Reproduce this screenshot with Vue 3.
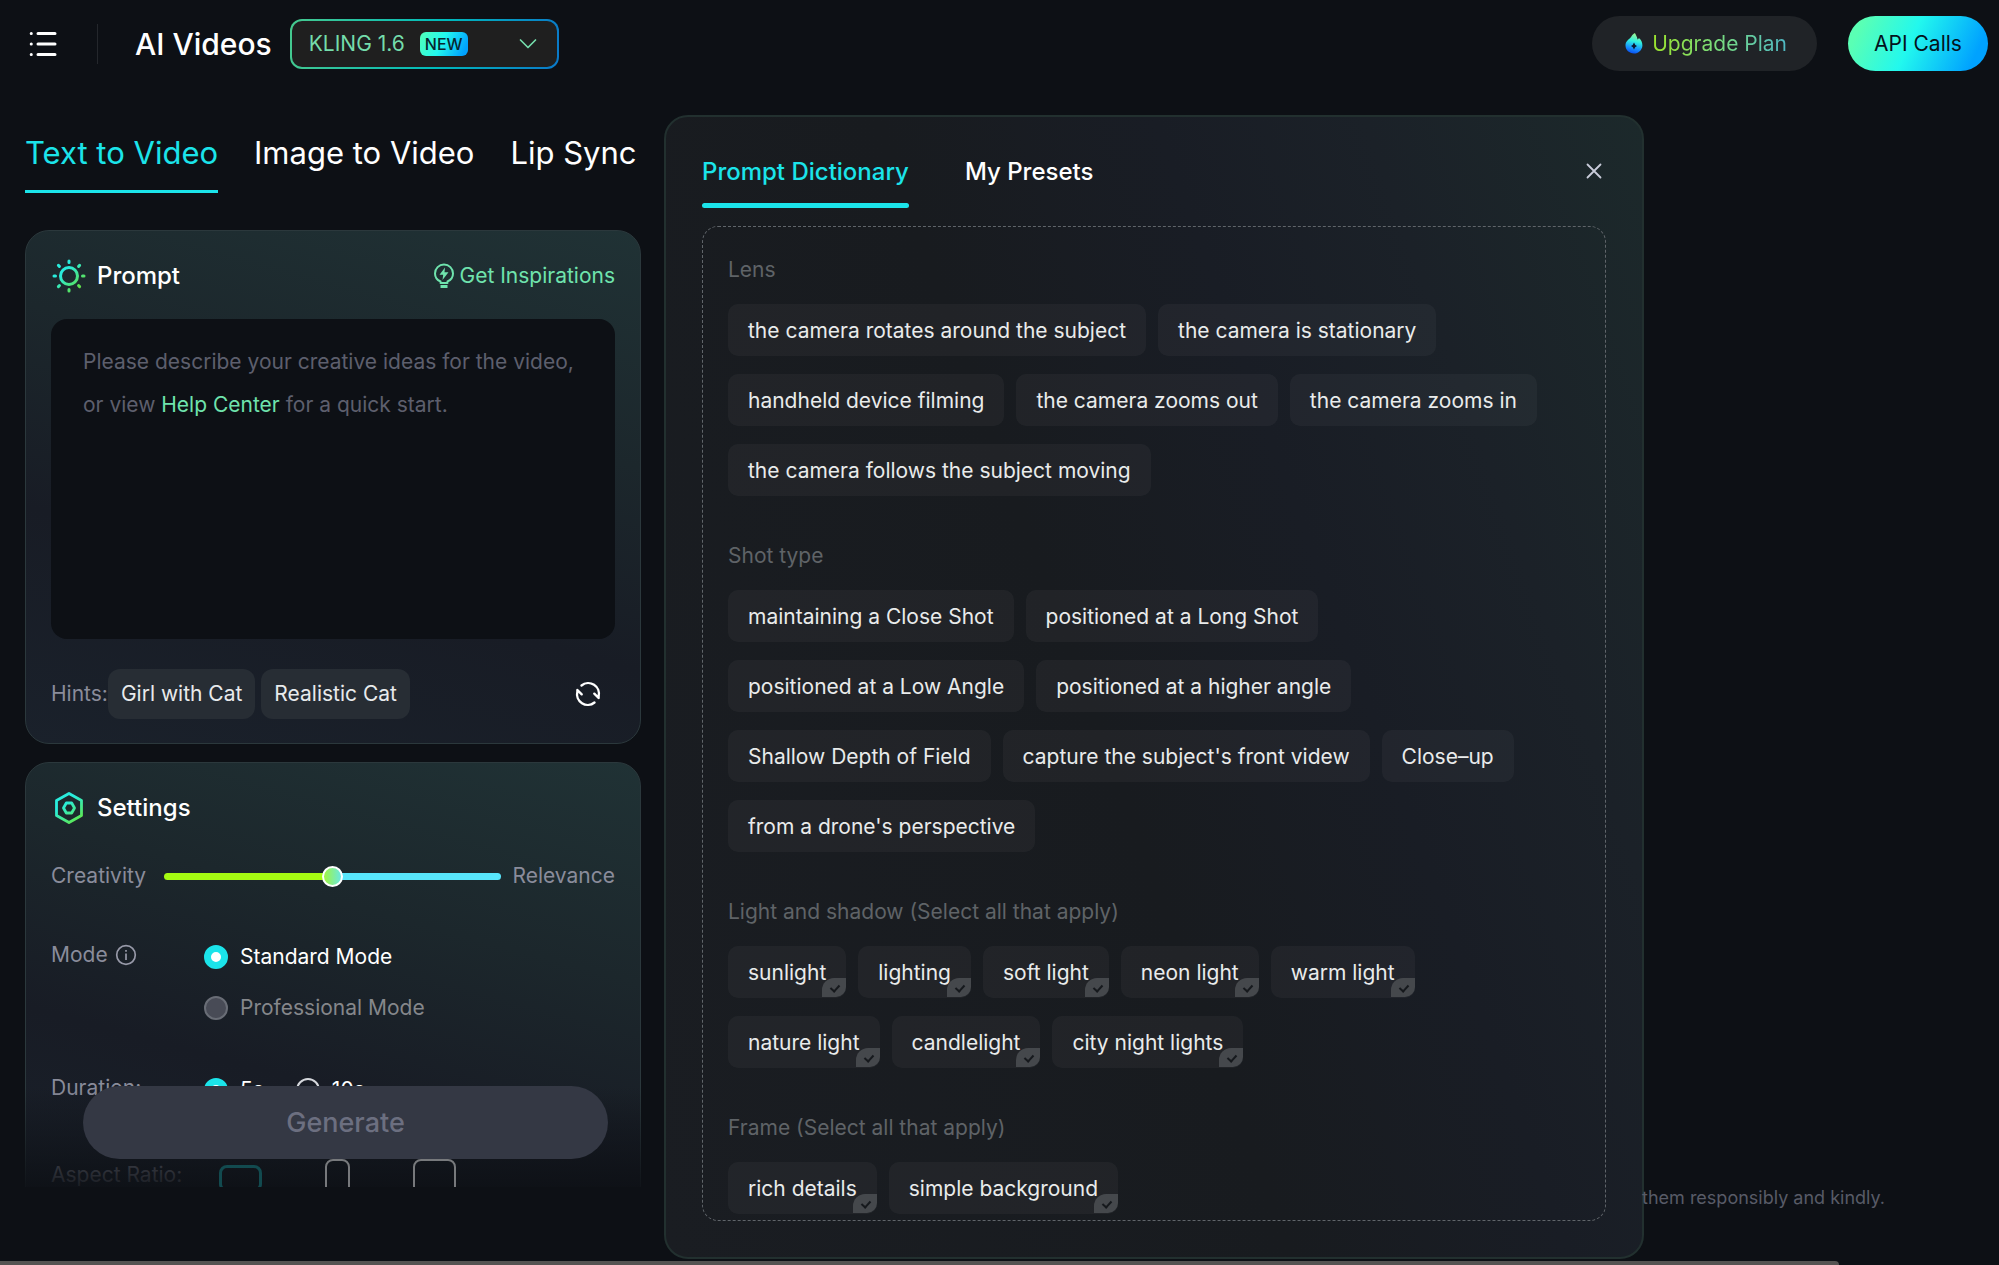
<script setup>
import { ref } from 'vue'

const model = ref('kling-1.6')
const prompt = ref('')
const creativity = ref(50)
const mode = ref('standard')
const duration = ref('5s')
const ratio = ref('16:9')

const tabs = ['Text to Video', 'Image to Video', 'Lip Sync']
const hints = ['Girl with Cat', 'Realistic Cat']
const ratios = [
  { value: '16:9', shape: 'wide' },
  { value: '9:16', shape: 'tall' },
  { value: '1:1', shape: 'square' },
]

const sections = [
  {
    title: 'Lens',
    multi: false,
    rows: [
      ['the camera rotates around the subject', 'the camera is stationary'],
      ['handheld device filming', 'the camera zooms out', 'the camera zooms in'],
      ['the camera follows the subject moving'],
    ],
  },
  {
    title: 'Shot type',
    multi: false,
    rows: [
      ['maintaining a Close Shot', 'positioned at a Long Shot'],
      ['positioned at a Low Angle', 'positioned at a higher angle'],
      ['Shallow Depth of Field', "capture the subject's front videw", 'Close–up'],
      ["from a drone's perspective"],
    ],
  },
  {
    title: 'Light and shadow (Select all that apply)',
    multi: true,
    rows: [
      ['sunlight', 'lighting', 'soft light', 'neon light', 'warm light'],
      ['nature light', 'candlelight', 'city night lights'],
    ],
  },
  {
    title: 'Frame (Select all that apply)',
    multi: true,
    rows: [['rich details', 'simple background']],
  },
]
</script>

<template>
  <div class="page">
    <header class="topbar">
      <button class="icon-btn menu" aria-label="Menu">
        <svg width="28" height="28" viewBox="0 0 28 28" fill="none" stroke="#fff" stroke-width="3" stroke-linecap="round">
          <path d="M9 3.5H26M9 14H26M9 24.5H26" />
          <path d="M2.2 3.5h.1M2.2 14h.1M2.2 24.5h.1" />
        </svg>
      </button>
      <span class="divider"></span>
      <h1>AI Videos</h1>
      <div class="model">
        <select v-model="model" aria-label="Model">
          <option value="kling-1.6">KLING 1.6</option>
        </select>
        <span class="new">NEW</span>
        <svg class="chevron" width="18" height="12" viewBox="0 0 18 12" fill="none" stroke="#74dcab" stroke-width="1.7" stroke-linecap="round" stroke-linejoin="round">
          <path d="M1.5 2L9 9.5L16.5 2" />
        </svg>
      </div>
      <div class="spacer"></div>
      <button class="upgrade">
        <svg width="18" height="21" viewBox="0 0 18 21">
          <defs>
            <linearGradient id="flame" x1="0.6" y1="0" x2="0.4" y2="1">
              <stop offset="0" stop-color="#a6f58c" />
              <stop offset="0.4" stop-color="#2ff0e0" />
              <stop offset="0.75" stop-color="#168fff" />
              <stop offset="1" stop-color="#0a4cf0" />
            </linearGradient>
          </defs>
          <path fill="url(#flame)" d="M9.3.3C9.600 0 10 .2 10.200.6C11 2.500 12.200 3.800 12.500 6.500C13.200 5.900 13.500 5 14.200 5.200C16 6.500 17.600 9.500 17.400 12.700C17 17.200 13.400 20.500 9 20.500C4.200 20.500.6 17.200.5 12.600C.4 7.800 4.200 6.500 6 4C7 2.500 7.500 1.500 9.300.3Z" />
          <path fill="#0b1730" d="M9 9.500Q9.800 12.200 12 13Q9.800 13.800 9 16.500Q8.200 13.800 6 13Q8.200 12.200 9 9.500Z" />
        </svg>
        <span>Upgrade Plan</span>
      </button>
      <button class="api">API Calls</button>
    </header>

    <main class="main">
      <section class="composer">
        <nav class="tabs">
          <a v-for="(tab, i) in tabs" :key="tab" href="#" :class="{ active: i === 0 }">{{ tab }}</a>
        </nav>

        <div class="scroll">
          <div class="card">
            <div class="card-head">
              <svg width="34" height="34" viewBox="0 0 34 34" fill="none" stroke="url(#sun)" stroke-width="3" stroke-linecap="round">
                <defs>
                  <linearGradient id="sun" gradientUnits="userSpaceOnUse" x1="6" y1="6" x2="28" y2="28">
                    <stop offset="0.3" stop-color="#29ecdc" />
                    <stop offset="1" stop-color="#60e04a" />
                  </linearGradient>
                </defs>
                <circle cx="17" cy="17" r="8.500" />
                <path d="M17 2v1.500M17 30.500V32M2 17h1.500M30.500 17H32M6.400 6.400l1 1M26.600 26.600l1 1M6.400 27.600l1-1M26.600 7.400l1-1" />
              </svg>
              <h2>Prompt</h2>
              <a class="inspire" href="#">
                <svg width="22" height="26" viewBox="0 0 22 26" fill="none" stroke="#6fe3ad" stroke-width="2" stroke-linejoin="round">
                  <path d="M7.500 20V18.500C4 17 2 14 2 10.500A9 9 0 0 1 20 10.500C20 14 18 17 14.500 18.500V20Z" />
                  <path d="M7.500 23.500H14.500" stroke-width="3" />
                  <path d="M12 4.500L6.500 11.800H10.200L9.500 17L15.500 9.200H11.500Z" fill="#6fe3ad" stroke="none" />
                </svg>
                <span>Get Inspirations</span>
              </a>
            </div>
            <div class="prompt-box">
              <textarea v-model="prompt" aria-label="Prompt"></textarea>
              <p v-if="!prompt">
                Please describe your creative ideas for the video, or view <a href="#">Help Center</a> for a quick start.
              </p>
            </div>
            <div class="hints">
              <span>Hints:</span>
              <button v-for="hint in hints" :key="hint" class="hint">{{ hint }}</button>
              <button class="icon-btn refresh" aria-label="Refresh hints">
                <svg width="26" height="26" viewBox="0 0 26 26" fill="none" stroke="#fff" stroke-width="2.400" stroke-linecap="round" stroke-linejoin="round">
                  <path d="M6.500 4.500A10.700 10.700 0 0 1 23.600 15.500V17L19.300 12.700" />
                  <path d="M19.500 21.500A10.700 10.700 0 0 1 2.400 10.500V9L6.700 13.300" />
                </svg>
              </button>
            </div>
          </div>

          <div class="card">
            <div class="card-head">
              <svg width="34" height="34" viewBox="0 0 34 34" fill="none" stroke="url(#hex)" stroke-width="2.800" stroke-linejoin="round">
                <defs>
                  <linearGradient id="hex" gradientUnits="userSpaceOnUse" x1="8" y1="4" x2="27" y2="30">
                    <stop offset="0.300" stop-color="#29ecdc" />
                    <stop offset="1" stop-color="#60e84a" />
                  </linearGradient>
                </defs>
                <path d="M17 2.500L29.500 9.500V24.500L17 31.500L4.500 24.500V9.500Z" />
                <path d="M14.300 12H19.700L22.500 17L19.700 22H14.300L11.500 17Z" />
              </svg>
              <h2>Settings</h2>
            </div>
            <div class="slider-row">
              <label for="creativity">Creativity</label>
              <input id="creativity" v-model="creativity" type="range" min="0" max="100" />
              <span>Relevance</span>
            </div>
            <div class="field mode-field">
              <div class="name">
                Mode
                <svg width="22" height="22" viewBox="0 0 22 22" fill="none" stroke="#9799a8" stroke-width="1.700">
                  <circle cx="11" cy="11" r="9.300" />
                  <path d="M11 9.500V16M11 6V7.800" />
                </svg>
              </div>
              <div class="choices column">
                <label><input v-model="mode" type="radio" name="mode" value="standard" /><span>Standard Mode</span></label>
                <label class="disabled"><input v-model="mode" type="radio" name="mode" value="pro" disabled /><span>Professional Mode</span></label>
              </div>
            </div>
            <div class="field duration-field">
              <div class="name">Duration:</div>
              <div class="choices">
                <label><input v-model="duration" type="radio" name="duration" value="5s" /><span>5s</span></label>
                <label><input v-model="duration" type="radio" name="duration" value="10s" /><span>10s</span></label>
              </div>
            </div>
            <div class="field ratio-field">
              <div class="name">Aspect Ratio:</div>
              <div class="ratios">
                <label v-for="r in ratios" :key="r.value">
                  <input v-model="ratio" type="radio" name="ratio" :value="r.value" :class="r.shape" :aria-label="r.value" />
                </label>
              </div>
            </div>
          </div>
        </div>

        <div class="fade"></div>
        <button class="generate" disabled>Generate</button>
      </section>

      <section class="dictionary" role="dialog" aria-label="Prompt Dictionary">
        <div class="dict-head">
          <a href="#" class="active">Prompt Dictionary</a>
          <a href="#">My Presets</a>
          <button class="icon-btn close" aria-label="Close">
            <svg width="16" height="16" viewBox="0 0 16 16" fill="none" stroke="#c9ccda" stroke-width="1.800" stroke-linecap="round">
              <path d="M1.500 1.500L14.500 14.500M14.500 1.500L1.500 14.500" />
            </svg>
          </button>
        </div>
        <div class="dict-body">
          <div v-for="s in sections" :key="s.title" class="group">
            <h3>{{ s.title }}</h3>
            <div v-for="(row, i) in s.rows" :key="i" class="row">
              <template v-for="item in row" :key="item">
                <label v-if="s.multi" class="chip"><input type="checkbox" />{{ item }}</label>
                <button v-else class="chip">{{ item }}</button>
              </template>
            </div>
          </div>
        </div>
      </section>

      <aside class="aside">
        <p>them responsibly and kindly.</p>
      </aside>
    </main>
    <div class="hscroll"></div>
  </div>
</template>

<style>
body {
  background: #0d1015;
}
</style>

<style scoped>
.page,
.page * {
  box-sizing: border-box;
}
.page {
  display: flex;
  flex-direction: column;
  height: 100vh;
  overflow: hidden;
  background: #0d1015;
  color: #fff;
  font: 400 21px/32px Inter, 'Liberation Sans', sans-serif;
}
button,
select,
textarea {
  font: inherit;
  color: inherit;
  border: 0;
  padding: 0;
  margin: 0;
}
button {
  white-space: nowrap;
}
a {
  text-decoration: none;
  color: inherit;
}
h1,
h2,
h3,
p {
  margin: 0;
  font-weight: 400;
}
.icon-btn {
  display: flex;
  background: none;
}

.topbar {
  display: flex;
  align-items: center;
  height: 87px;
  padding: 0 11px 0 29px;
}
.divider {
  width: 1px;
  height: 40px;
  margin: 0 37px 0 40px;
  background: #24272c;
}
h1 {
  font-size: 30px;
  font-weight: 500;
  white-space: nowrap;
}
.model {
  position: relative;
  width: 269px;
  height: 50px;
  margin-left: 18px;
  border: 2px solid transparent;
  border-radius: 12px;
  background: linear-gradient(#1f1f1f, #1f1f1f) padding-box, linear-gradient(100deg, #46c98e, #0bb 55%, #0a78c8) border-box;
}
.model select {
  appearance: none;
  width: 100%;
  height: 100%;
  padding-left: 17px;
  background: none;
  color: #74dcab;
}
.new {
  position: absolute;
  left: 128px;
  top: 11px;
  width: 48px;
  border-radius: 6px;
  background: linear-gradient(115deg, #52ffb8, #22f8ee 45%, #00a2ff 90%);
  color: #06262e;
  font-size: 16px;
  font-weight: 500;
  line-height: 24px;
  text-align: center;
  pointer-events: none;
}
.chevron {
  position: absolute;
  right: 20px;
  top: 17px;
  pointer-events: none;
}
.spacer {
  flex: 1;
}
.upgrade,
.api {
  display: flex;
  align-items: center;
  justify-content: center;
  height: 55px;
  border-radius: 28px;
}
.upgrade {
  gap: 9px;
  padding: 0 30px 0 33px;
  background: #202327;
}
.upgrade span {
  background: linear-gradient(90deg, #9be22d, #78dc80 50%, #4fb8c4);
  background-clip: text;
  color: transparent;
}
.api {
  width: 140px;
  margin-left: 31px;
  background: linear-gradient(115deg, #5affb4 10%, #22f8ee 45%, #00a2ff 88%);
  color: #04131c;
}

.main {
  flex: 1;
  min-height: 0;
  display: grid;
  grid-template-columns: minmax(0, 616fr) minmax(0, 1003fr) minmax(0, 355fr);
  padding: 28px 0 0 25px;
}

.composer {
  position: relative;
  display: flex;
  flex-direction: column;
  min-height: 0;
  padding-bottom: 72px;
}
.tabs {
  display: flex;
  gap: 36px;
  margin-bottom: 37px;
  font-size: 31px;
  white-space: nowrap;
}
.tabs a {
  height: 78px;
  line-height: 76px;
}
.tabs .active {
  color: #1be4ea;
  border-bottom: 3px solid #1be4ea;
}
.scroll {
  flex: 1;
  min-height: 0;
  overflow: hidden;
  display: flex;
  flex-direction: column;
  gap: 18px;
}
.card {
  flex: none;
  padding: 28px 25px 24px;
  border: 1px solid #2b383c;
  border-radius: 24px;
  background: linear-gradient(195deg, #203235 0%, #1c272c 35%, #181c25 65%, #1a212b 100%);
}
.card-head {
  display: flex;
  align-items: center;
  gap: 11px;
  height: 34px;
}
.card-head svg {
  flex: none;
}
.card-head > svg {
  margin-left: 1px;
}
h2 {
  font-size: 24px;
  font-weight: 500;
}
.inspire {
  display: flex;
  align-items: center;
  gap: 4px;
  margin-left: auto;
  color: #6fe3ad;
  white-space: nowrap;
}
.prompt-box {
  position: relative;
  height: 320px;
  margin-top: 26px;
}
.prompt-box textarea {
  display: block;
  width: 100%;
  height: 100%;
  padding: 21px 32px;
  border-radius: 16px;
  background: #0d1015;
  line-height: 43px;
  resize: none;
}
.prompt-box p {
  position: absolute;
  inset: 21px 32px auto;
  line-height: 43px;
  color: #5d5f6d;
}
.prompt-box p a {
  color: #6fe3ad;
}
.hints {
  display: flex;
  align-items: center;
  margin-top: 30px;
  color: #8a8c9b;
}
.hint {
  height: 50px;
  padding: 0 13px;
  margin-right: 6px;
  border-radius: 12px;
  background: #272d34;
  color: #e8eaec;
}
.refresh {
  margin-left: auto;
  margin-right: 14px;
}
.slider-row {
  display: flex;
  align-items: center;
  margin-top: 35px;
  color: #8a8c9b;
}
.slider-row input {
  appearance: none;
  flex: 1;
  min-width: 0;
  height: 7px;
  margin: 0 11px 0 18px;
  border-radius: 4px;
  background: linear-gradient(90deg, #a5fb12 50%, #58e6fb 50%);
}
.slider-row input::-webkit-slider-thumb {
  appearance: none;
  width: 21px;
  height: 21px;
  border: 2px solid #fff;
  border-radius: 50%;
  background: linear-gradient(90deg, #a0f540, #6ae8e0);
}
.field {
  display: flex;
  align-items: flex-start;
}
.field .name {
  display: flex;
  align-items: center;
  gap: 7px;
  width: 153px;
  color: #8a8c9b;
  white-space: nowrap;
}
.mode-field {
  margin-top: 47px;
}
.duration-field {
  margin-top: 48px;
}
.choices {
  display: flex;
  gap: 32px;
  padding-top: 2px;
}
.choices.column {
  flex-direction: column;
  gap: 19px;
}
.choices label {
  display: flex;
  align-items: center;
  gap: 12px;
}
.choices .disabled {
  color: #85878b;
}
.choices input {
  appearance: none;
  width: 24px;
  height: 24px;
  margin: 0;
  border: 2px solid #d5d7dc;
  border-radius: 50%;
}
.choices input:checked {
  border: 7px solid #1be4ea;
  background: #fff;
}
.choices input:disabled {
  border-color: #696d76;
  background: #484b56;
}
.ratio-field {
  margin-top: 53px;
}
.ratios {
  display: flex;
  padding-left: 15px;
  gap: 63px;
}
.ratios label {
  display: flex;
  position: relative;
  z-index: 2;
}
.ratios input {
  appearance: none;
  margin: 0;
  border: 2px solid #77797c;
  border-radius: 8px;
}
.ratios .wide {
  width: 43px;
  height: 27px;
  margin-top: 6px;
  border-width: 3px;
  border-color: #124a4f;
}
.ratios .tall {
  width: 25px;
  height: 43px;
}
.ratios .square {
  width: 43px;
  height: 43px;
}
.fade {
  position: absolute;
  left: 0;
  right: 0;
  bottom: 60px;
  height: 112px;
  background: linear-gradient(#0d101500, #0d1015);
  pointer-events: none;
}
.generate {
  position: absolute;
  z-index: 3;
  left: 58px;
  right: 33px;
  bottom: 100px;
  height: 73px;
  border-radius: 37px;
  background: #343844;
  color: #6c6f80;
  font-size: 27px;
  font-weight: 500;
}

.dictionary {
  display: flex;
  flex-direction: column;
  min-height: 0;
  margin-left: 23px;
  padding: 22px 36px;
  border: 2px solid #22302f;
  border-radius: 24px;
  background: linear-gradient(250deg, #1c292b 0%, #1b2128 20%, #191d25 35%, #181b1f 55%, #1a1d22 100%);
}
.dict-head {
  display: flex;
  gap: 56px;
  flex: none;
  height: 69px;
  margin-bottom: 18px;
  font-size: 24px;
  font-weight: 500;
  line-height: 66px;
  white-space: nowrap;
}
.dict-head .active {
  position: relative;
  color: #1be4ea;
}
.dict-head .active::after {
  content: '';
  position: absolute;
  left: 0;
  right: 0;
  bottom: 0;
  height: 5px;
  border-radius: 3px;
  background: #1be4ea;
}
.close {
  margin-left: auto;
  margin-right: 4px;
  height: 64px;
  align-items: center;
}
.dict-body {
  flex: 1;
  min-height: 0;
  overflow: hidden;
  margin-bottom: 14px;
  padding: 27px 25px 0;
  border: 1px dashed #60656a;
  border-radius: 16px;
}
.group {
  display: flex;
  flex-direction: column;
  gap: 18px;
  margin-bottom: 44px;
}
h3 {
  font-size: 21px;
  color: #5f6367;
  white-space: nowrap;
}
.row {
  display: flex;
  gap: 12px;
}
.chip {
  position: relative;
  height: 52px;
  padding: 2px 20px 0;
  border-radius: 10px;
  background: #ffffff0a;
  color: #e9ebeb;
  line-height: 50px;
  white-space: nowrap;
}
.chip input {
  appearance: none;
  position: absolute;
  right: 0;
  bottom: 1px;
  width: 24px;
  height: 19px;
  margin: 0;
  border-radius: 12px 0 10px 0;
  background: #45484c;
}
.chip input::after {
  content: '';
  position: absolute;
  left: 10px;
  top: 5px;
  width: 4px;
  height: 7px;
  border: solid #16191d;
  border-width: 0 2px 2px 0;
  transform: rotate(42deg);
}

.aside {
  display: flex;
  align-items: flex-end;
  justify-content: flex-end;
  padding: 0 114px 47px 0;
}
.aside p {
  font-size: 18px;
  line-height: 28px;
  color: #585b67;
  white-space: nowrap;
}
.hscroll {
  flex: none;
  width: 92%;
  height: 4px;
  margin-top: 2px;
  border-radius: 0 4px 0 0;
  background: #555352;
}
</style>
